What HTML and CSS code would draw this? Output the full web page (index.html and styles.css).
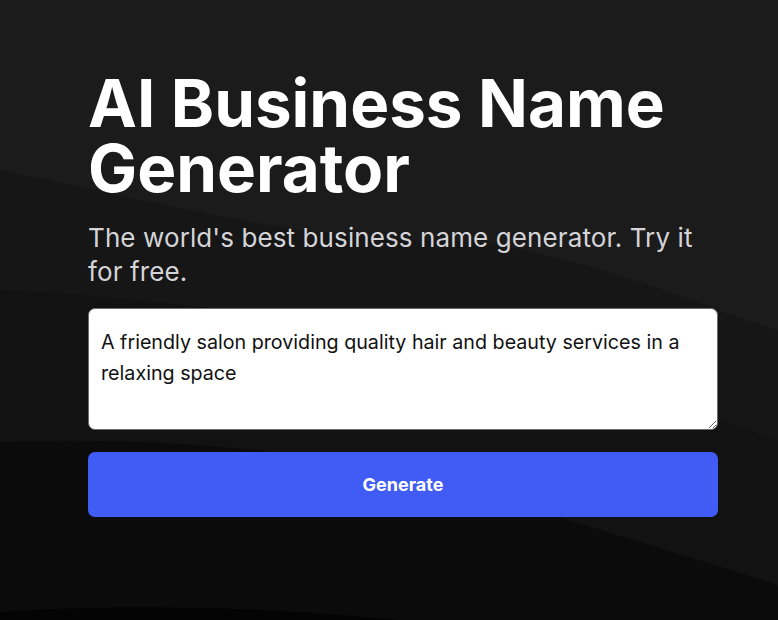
FILE: index.html
```html
<!DOCTYPE html>
<html lang="en">
<head>
<meta charset="utf-8">
<title>AI Business Name Generator</title>
<link rel="stylesheet" href="styles.css">
</head>
<body>
<div class="bg" aria-hidden="true">
  <svg viewBox="0 0 778 620" preserveAspectRatio="none" width="778" height="620">
    <rect width="778" height="620" fill="#1b1b1b"/>
    <path d="M0 170 C 150 200, 300 240, 420 240 C 560 240, 680 300, 778 330 L778 620 L0 620 Z" fill="#161616"/>
    <path d="M0 290 C 200 300, 380 330, 520 360 C 640 390, 720 420, 778 440 L778 620 L0 620 Z" fill="#121212"/>
    <path d="M0 442 C 160 436, 330 450, 470 490 C 600 530, 700 560, 778 585 L778 620 L0 620 Z" fill="#0b0b0b"/>
    <path d="M0 612 C 120 604, 260 606, 400 620 L0 620 Z" fill="#040404"/>
  </svg>
</div>
<main class="wrap">
  <h1 class="title">AI Business Name Generator</h1>
  <p class="sub">The world's best business name generator. Try it for free.</p>
  <textarea class="field" id="desc">A friendly salon providing quality hair and beauty services in a relaxing space</textarea>
  <button class="btn" type="button">Generate</button>
</main>
<script>
  var t = document.getElementById('desc');
  t.focus();
  t.setSelectionRange(t.value.length, t.value.length);
</script>
</body>
</html>
```
FILE: styles.css
```css
html, body {
  margin: 0;
  padding: 0;
  height: 100%;
  overflow: hidden;
}
body {
  background: #111;
  font-family: Inter, "Noto Sans", sans-serif;
  position: relative;
}
.bg {
  position: absolute;
  inset: 0;
  z-index: 0;
}
.bg svg { display: block; }
.wrap {
  position: relative;
  z-index: 1;
  box-sizing: border-box;
  width: 630px;
  margin-left: 88px;
  padding-top: 71px;
  display: flex;
  flex-direction: column;
}
.title {
  margin: 0;
  color: #fff;
  font-size: 65.5px;
  line-height: 65px;
  font-weight: 700;
}
.sub {
  margin: 20px 0 0;
  color: #d4d4d8;
  font-size: 26px;
  line-height: 34px;
  font-weight: 400;
  letter-spacing: 0.1px;
}
.field {
  margin-top: 19px;
  box-sizing: border-box;
  width: 630px;
  height: 122px;
  padding: 18px 12px 12px;
  border: 1px solid #6b6b6b;
  border-radius: 7px;
  background: #fff;
  color: #111;
  font-family: Inter, "Noto Sans", sans-serif;
  font-size: 19.7px;
  line-height: 31px;
  outline: none;
  caret-color: #111;
}
.btn {
  margin-top: 22px;
  height: 65px;
  width: 630px;
  border: none;
  border-radius: 7px;
  background: #405cf5;
  color: #fff;
  font-family: Inter, "Noto Sans", sans-serif;
  font-size: 18px;
  font-weight: 700;
  cursor: pointer;
}
```
